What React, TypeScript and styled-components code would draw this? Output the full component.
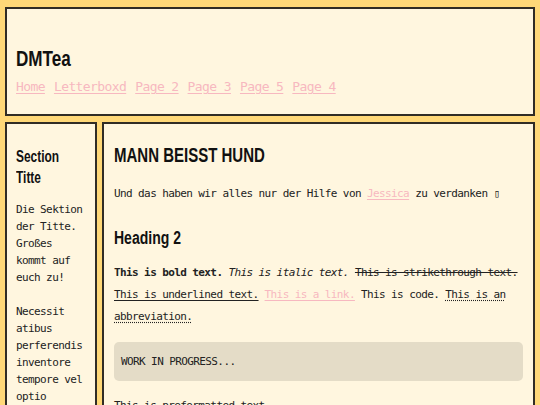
import React from 'react'
import styled, { createGlobalStyle } from 'styled-components'

const GlobalStyle = createGlobalStyle`
  html, body {
    margin: 0;
    background: #ffd878;
  }
  body {
    padding: 7px 5px;
    font-family: 'DejaVu Sans Mono', 'Liberation Mono', monospace;
    font-size: 11px;
    letter-spacing: -0.6px;
    color: #222;
  }
  * {
    box-sizing: border-box;
  }
`

// the headings use a condensed grotesque; squeeze Liberation Sans to get the same look
const headingFont = `'Liberation Sans', Arial, sans-serif`

const Page = styled.div`
  display: flex;
  flex-direction: column;
  gap: 6px;
`

const Panel = styled.div`
  background: #fff6df;
  border: 2px solid #302c25;
`

const Header = styled(Panel)`
  padding: 37px 9px 19px;
`

const Heading = styled.h2<{ $size: number; $lh: number; $top?: number; $bottom?: number }>`
  margin: ${p => p.$top ?? 0}px 0 ${p => p.$bottom ?? 0}px;
  font-family: ${headingFont};
  font-size: ${p => p.$size}px;
  line-height: ${p => p.$lh}px;
  letter-spacing: 0;
  font-weight: 700;
  color: #111;
  transform: scaleX(0.75);
  transform-origin: left center;
`

const Nav = styled.nav`
  display: flex;
  gap: 9px;
  margin-top: 8px;
  font-size: 13px;
  line-height: 16px;
`

const Link = styled.a`
  color: #f7b8c0;
  text-decoration: underline;
  text-underline-offset: 2px;
`

const Columns = styled.div`
  display: flex;
  gap: 5px;
  align-items: stretch;
`

const Sidebar = styled(Panel)`
  width: 92px;
  flex: none;
  padding: 9px 9px 20px;
`

const SideText = styled.p`
  margin: 0 0 17px;
  line-height: 17px;
`

const Main = styled(Panel)`
  flex: 1;
  min-width: 0;
  padding: 10px 10px 20px;
`

const Text = styled.p<{ $bottom: number }>`
  margin: 0 0 ${p => p.$bottom}px;
  line-height: 22px;
`

const Strike = styled.s`
  text-decoration-thickness: 1px;
`

const Under = styled.u`
  text-underline-offset: 2px;
`

const Code = styled.code`
  font-family: inherit;
  font-size: inherit;
`

const Abbr = styled.abbr`
  text-decoration: underline dotted;
  text-underline-offset: 2px;
`

const Notice = styled.pre`
  margin: 0 0 14px;
  padding: 12px 7px;
  background: #e4dcc7;
  border-radius: 5px;
  font-family: inherit;
  font-size: 11px;
  line-height: 15px;
`

const Preformatted = styled.pre`
  margin: 0;
  font-family: inherit;
  font-size: 11px;
  line-height: 22px;
`

export default function App() {
  return (
    <>
      <GlobalStyle />
      <Page>
        <Header>
          <Heading as="h1" $size={22.8} $lh={25}>DMTea</Heading>
          <Nav>
            <Link href="#">Home</Link>
            <Link href="#">Letterboxd</Link>
            <Link href="#">Page 2</Link>
            <Link href="#">Page 3</Link>
            <Link href="#">Page 5</Link>
            <Link href="#">Page 4</Link>
          </Nav>
        </Header>
        <Columns>
          <Sidebar>
            <Heading as="h3" $size={15.9} $lh={21} $top={13} $bottom={13}>Section Titte</Heading>
            <SideText>Die Sektion der Titte. Großes kommt auf euch zu!</SideText>
            <SideText>Necessit atibus perferendis inventore tempore vel optio</SideText>
          </Sidebar>
          <Main>
            <Heading $size={20} $lh={22} $top={10} $bottom={17}>MANN BEISST HUND</Heading>
            <Text $bottom={22}>
              Und das haben wir alles nur der Hilfe von <Link href="#">Jessica</Link> zu verdanken ▯
            </Text>
            <Heading as="h3" $size={18.7} $lh={21} $bottom={14}>Heading 2</Heading>
            <Text $bottom={14}>
              <strong>This is bold text.</strong> <em>This is italic text.</em>{' '}
              <Strike>This is strikethrough text.</Strike> <Under>This is underlined text.</Under>{' '}
              <Link href="#">This is a link.</Link> <Code>This is code.</Code>{' '}
              <Abbr title="abbreviation">This is an abbreviation.</Abbr>
            </Text>
            <Notice>WORK IN PROGRESS...</Notice>
            <Preformatted>This is preformatted text.</Preformatted>
          </Main>
        </Columns>
      </Page>
    </>
  )
}
